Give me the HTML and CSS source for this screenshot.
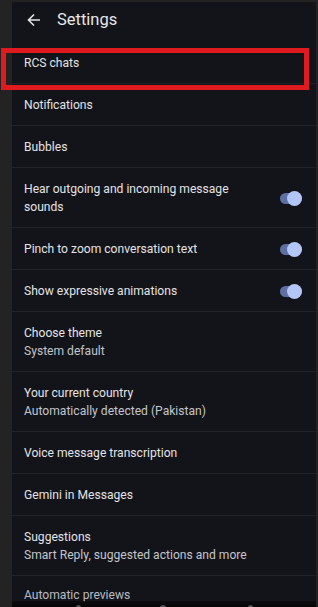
FILE: index.html
```html
<!DOCTYPE html>
<html lang="en">
<head>
    <meta charset="UTF-8">
    <meta name="viewport" content="width=device-width, initial-scale=1.0">
    <title>Settings</title>
    <link rel="stylesheet" href="styles.css">
</head>
<body>

<div class="screen">
    <!-- top bar -->
    <div class="app-bar">
        <svg class="back" width="16" height="16" viewBox="0 0 16 16">
            <path d="M14 8H2.5M8 2.5L2.5 8L8 13.5" fill="none" stroke="#e3e3e6" stroke-width="1.6"/>
        </svg>
        <span class="title">Settings</span>
    </div>

    <div class="list">
        <div class="row">RCS chats</div>
        <div class="row">Notifications</div>
        <div class="row">Bubbles</div>
        <div class="row toggle-row">
            <span class="text">Hear outgoing and incoming message sounds</span>
            <span class="switch"></span>
        </div>
        <div class="row toggle-row">
            <span class="text">Pinch to zoom conversation text</span>
            <span class="switch"></span>
        </div>
        <div class="row toggle-row">
            <span class="text">Show expressive animations</span>
            <span class="switch"></span>
        </div>
        <div class="row">
            <div>Choose theme</div>
            <div class="sub">System default</div>
        </div>
        <div class="row">
            <div>Your current country</div>
            <div class="sub">Automatically detected (Pakistan)</div>
        </div>
        <div class="row">Voice message transcription</div>
        <div class="row">Gemini in Messages</div>
        <div class="row">
            <div>Suggestions</div>
            <div class="sub">Smart Reply, suggested actions and more</div>
        </div>
        <div class="row dim">Automatic previews</div>
    </div>

    <!-- gesture/nav bar fading over the list -->
    <div class="nav-bar">
        <span class="nav-dot d1"></span>
        <span class="nav-dot d2"></span>
        <span class="nav-dot d3"></span>
    </div>
</div>

<!-- annotation box -->
<div class="highlight"></div>

</body>
</html>
```

FILE: styles.css
```css
body {
    margin: 0;
    padding: 2px 2px 0 12px;
    background-color: #232323;
    font-family: Roboto, "Noto Sans", sans-serif;
    height: 607px;
    box-sizing: border-box;
    overflow: hidden;
}
.screen {
    position: relative;
    background-color: #131419;
    height: 605px;
    overflow: hidden;
    color: #e3e3e6;
}
.app-bar {
    height: 40px;
    display: flex;
    align-items: center;
    padding-left: 14px;
    padding-bottom: 5px;
    box-sizing: border-box;
}
.back {
    margin-right: 15px;
}
.title {
    font-size: 16.5px;
    color: #e6e6e9;
}
.row {
    padding: 12px 14px 11px 12px;
    border-bottom: 1px solid #22232a;
    font-size: 12.1px;
    line-height: 18px;
}
.sub {
    color: #c3c5cc;
}
.toggle-row {
    display: flex;
    align-items: center;
    justify-content: space-between;
}
.toggle-row .text {
    max-width: 220px;
}
.switch {
    position: relative;
    width: 22px;
    height: 11px;
    border-radius: 6px;
    background-color: #5d6fa3;
    flex-shrink: 0;
}
.switch::after {
    content: "";
    position: absolute;
    right: 0;
    top: -2px;
    width: 15px;
    height: 15px;
    border-radius: 50%;
    background-color: #b4c6f6;
}
.dim {
    color: #b9bbc1;
    border-bottom: none;
    padding-top: 10px;
}
.nav-bar {
    position: absolute;
    left: 0;
    right: 0;
    bottom: 0;
    height: 6px;
    background: linear-gradient(rgba(8, 8, 10, 0.7), #050506);
}
.nav-dot {
    position: absolute;
    bottom: -3px;
    height: 5px;
    background-color: #55565a;
    border-radius: 3px;
}
.d1 {
    left: 64px;
    width: 5px;
}
.d2 {
    left: 148px;
    width: 6px;
    border-radius: 50%;
}
.d3 {
    left: 236px;
    width: 5px;
}
.highlight {
    position: absolute;
    left: 1px;
    top: 48px;
    width: 308px;
    height: 42px;
    border: 5px solid #e01b1f;
    box-sizing: border-box;
}
```
